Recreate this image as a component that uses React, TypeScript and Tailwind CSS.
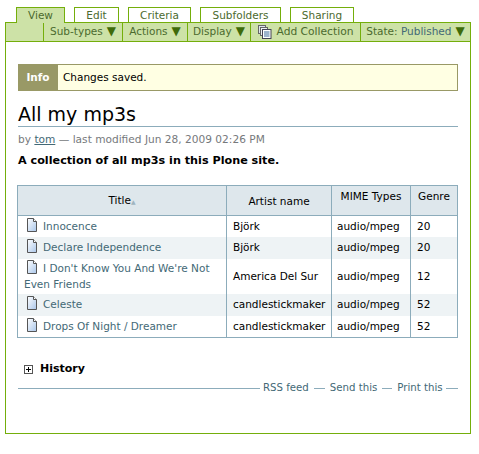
import React from "react";

const font = { fontFamily: '"DejaVu Sans", Verdana, sans-serif' };

function DocIcon() {
  return (
    <svg width="16" height="16" viewBox="0 0 16 16" className="inline-block align-[-3px] mr-[3px]">
      <defs>
        <linearGradient id="d" x1="0" y1="0" x2="1" y2="1">
          <stop offset="0" stopColor="#ffffff" />
          <stop offset="1" stopColor="#a9c6ea" />
        </linearGradient>
      </defs>
      <path d="M3.5 1.5H9.5L12.5 4.5V14.5H3.5Z" fill="url(#d)" stroke="#555" strokeWidth="1" />
      <path d="M9.5 1.5V4.5H12.5" fill="#fff" stroke="#555" strokeWidth="1" />
    </svg>
  );
}

function CopyIcon() {
  return (
    <svg width="14" height="14" viewBox="0 0 14 14" className="mr-[5px] mt-[1px]">
      <rect x="0.5" y="0.5" width="7" height="8" fill="#dfe6ee" stroke="#666" />
      <rect x="2.5" y="2.5" width="7" height="8" fill="#eef2f6" stroke="#666" />
      <rect x="4.5" y="4.5" width="8.5" height="9" fill="#fff" stroke="#445" />
      <path d="M6 7H11.5M6 9H11.5M6 11H11.5" stroke="#3d6a9c" />
    </svg>
  );
}

function Tri() {
  return <span className="text-[#3f6b0a] text-[12px] ml-[4px]">▼</span>;
}

const tabs = [
  { t: "View", w: "w-[49px]", on: true },
  { t: "Edit", w: "w-[45px]" },
  { t: "Criteria", w: "w-[63px]" },
  { t: "Subfolders", w: "w-[81px]" },
  { t: "Sharing", w: "w-[64px]" },
];

const rows = [
  { title: "Innocence", artist: "Björk", genre: "20", h: "h-[21px]" },
  { title: "Declare Independence", artist: "Björk", genre: "20", h: "h-[22px]", alt: true },
  { title: "I Don't Know You And We're Not Even Friends", artist: "America Del Sur", genre: "12", h: "h-[35px]" },
  { title: "Celeste", artist: "candlestickmaker", genre: "52", h: "h-[22px]", alt: true },
  { title: "Drops Of Night / Dreamer", artist: "candlestickmaker", genre: "52", h: "h-[22px]" },
];

export default function App() {
  return (
    <div style={font} className="w-[479px] h-[454px] bg-white text-[10.5px] text-black overflow-hidden pt-[7px] pl-[5px]">
      <div className="flex pl-[11px] gap-[9px] h-[15px] relative z-10">
        {tabs.map((x) => (
          <div
            key={x.t}
            className={`${x.w} border border-[#74ae0b] text-center leading-[15px] text-[#4b6a2e] ${
              x.on ? "bg-[#cde2a7] border-b-0 h-[16px]" : "bg-white border-b-0 h-[15px]"
            }`}
          >
            {x.t}
          </div>
        ))}
      </div>
      <div className="w-[466px] h-[412px] border border-[#74ae0b] box-border">
        <div className="h-[19px] bg-[#cde2a7] border-b border-[#74ae0b] flex text-[#4b6a2e] leading-[15px]">
          <div className="w-[38px] border-r border-[#74ae0b]" />
          <div className="w-[79px] border-r border-[#74ae0b] flex items-start pt-[1px] justify-center">Sub-types<Tri /></div>
          <div className="w-[65px] border-r border-[#74ae0b] flex items-start pt-[1px] justify-center">Actions<Tri /></div>
          <div className="w-[63px] border-r border-[#74ae0b] flex items-start pt-[1px] justify-center">Display<Tri /></div>
          <div className="w-[110px] border-r border-[#74ae0b] flex items-start pt-[1px] justify-center text-[10.7px]"><CopyIcon />Add Collection</div>
          <div className="flex-1 flex items-start pt-[1px] justify-center">State:&nbsp;<span className="text-[#436976]">Published</span><Tri /></div>
        </div>

        <div className="px-[12px]">
          <div className="mt-[22px] h-[27px] border border-[#999966] bg-[#ffffe3] flex items-center">
            <div className="w-[40px] -ml-px h-[27px] bg-[#999966] text-white font-bold flex items-center justify-center pt-[1px]">Info</div>
            <div className="pl-[5px] pt-[1px]">Changes saved.</div>
          </div>

          <h1 className="mt-[12px] h-[23px] border-b border-[#8cacbb] text-[19px] leading-[22px] box-content">All my mp3s</h1>
          <div className="mt-[5px] text-[10.6px] leading-[15px] text-[#76797c]">
            by <span className="text-[#436976] underline">tom</span> — last modified Jun 28, 2009 02:26 PM
          </div>
          <div className="mt-[6px] font-bold text-[11.2px] leading-[15px]">A collection of all mp3s in this Plone site.</div>

          <table className="mt-[17px] -ml-px w-[440px] table-fixed border-collapse border border-[#8cacbb]">
            <colgroup>
              <col className="w-[209px]" />
              <col className="w-[105px]" />
              <col className="w-[79px]" />
              <col className="w-[47px]" />
            </colgroup>
            <thead>
              <tr className="h-[30px] bg-[#dee7ec] font-normal">
                <th className="border border-[#8cacbb] font-normal text-center">
                  Title<span className="text-[#9fb4c0] text-[6px] align-middle">▲</span>
                </th>
                <th className="border border-[#8cacbb] font-normal text-center pt-[3px]">Artist name</th>
                <th className="border border-[#8cacbb] font-normal text-center align-top pt-[3px]">MIME Types</th>
                <th className="border border-[#8cacbb] font-normal text-center align-top pt-[3px]">Genre</th>
              </tr>
            </thead>
            <tbody>
              {rows.map((r) => (
                <tr key={r.title} className={`${r.h} ${r.alt ? "bg-[#eef3f5]" : "bg-white"}`}>
                  <td className="border-r border-[#8cacbb] pl-[6px] pr-[2px] pb-[2px] leading-[16px] text-[#436976] align-middle">
                    <DocIcon />
                    {r.title}
                  </td>
                  <td className="border-r border-[#8cacbb] pl-[6px] align-middle pt-[1px]">{r.artist}</td>
                  <td className="border-r border-[#8cacbb] pl-[5px] align-middle pt-[1px]">audio/mpeg</td>
                  <td className="pl-[6px] align-middle pt-[1px]">{r.genre}</td>
                </tr>
              ))}
            </tbody>
          </table>

          <div className="mt-[23px] flex items-center h-[16px] pl-[6px] font-bold text-[11px]">
            <svg width="9" height="9" viewBox="0 0 9 9" className="mr-[7px]">
              <rect x="0.5" y="0.5" width="8" height="8" fill="#fff" stroke="#555" />
              <path d="M2 4.5H7M4.5 2V7" stroke="#000" />
            </svg>
            History
          </div>

          <div className="mt-[3px] flex items-center h-[16px] text-[10.2px] text-[#436976] relative">
            <div className="w-[242px] h-px bg-[#8cacbb] mr-[3px]" />
            <span>RSS feed</span>
            <div className="w-[11px] h-px bg-[#8cacbb] mx-[5px]" />
            <span>Send this</span>
            <div className="w-[10px] h-px bg-[#8cacbb] mx-[5px]" />
            <span>Print this</span>
            <div className="flex-1 h-px bg-[#8cacbb] ml-[3px]" />
          </div>
        </div>
      </div>
    </div>
  );
}
